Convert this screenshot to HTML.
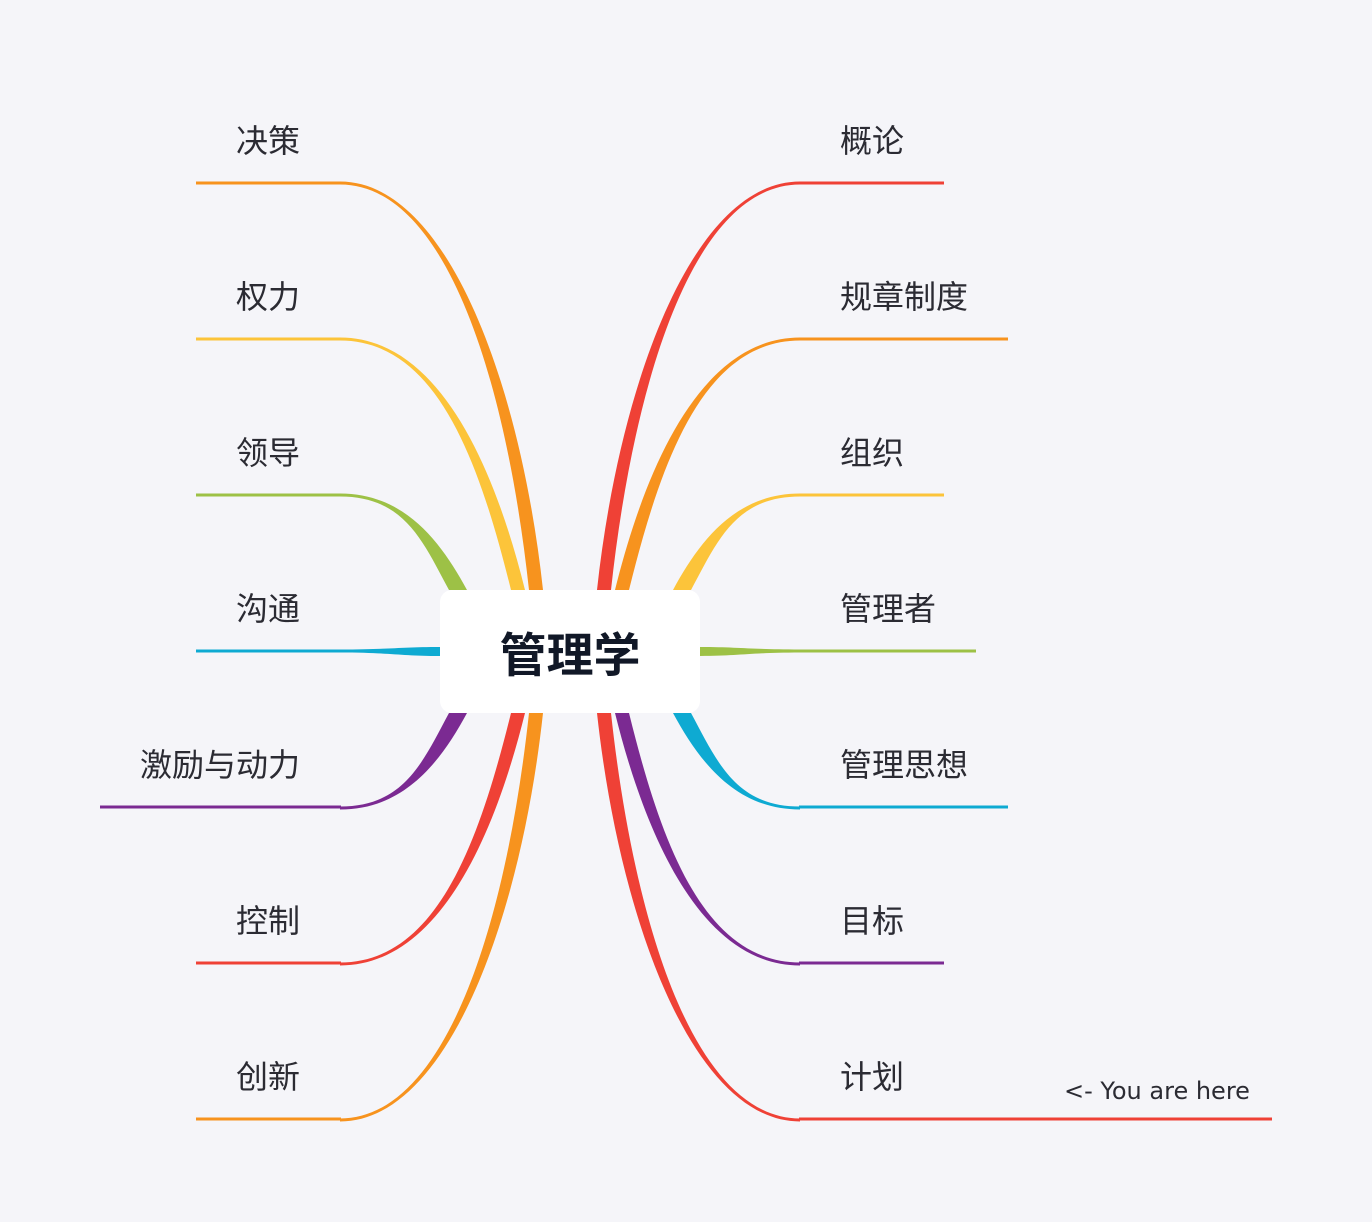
<!DOCTYPE html>
<html><head><meta charset="utf-8"><style>
html,body{margin:0;padding:0;background:#f5f5f9;}
body{width:1372px;height:1222px;position:relative;overflow:hidden;font-family:"Liberation Sans","Noto Sans CJK SC",sans-serif;}
.l{position:absolute;font-size:32px;color:#2b2b33;line-height:38px;white-space:nowrap;}
.lt{right:1072px;text-align:right;}
.rt{left:840px;}
.box{position:absolute;left:440px;top:590px;width:260px;height:123px;background:#fff;border-radius:12px;display:flex;align-items:center;justify-content:center;font-size:47px;font-weight:bold;color:#111827;}
.here{position:absolute;left:1064px;top:1077px;font-size:24px;color:#2b2b33;font-family:"DejaVu Sans",sans-serif;}
</style></head><body>
<svg width="1372" height="1222" style="position:absolute;left:0;top:0">
<!-- left upper -->
<g>
<path fill="#fcc43a" d="M340,337.5 C438,337.5 494,465 525,590 L511,590 C480,465 438,340.5 340,340.5Z"/>
<path fill="#f7931e" d="M340,181.5 C448,181.5 521,387 543,590 L529,590 C507,387 448,184.5 340,184.5Z"/>
<path fill="#9dc146" d="M340,493.5 C405,493.5 441,542 467,590 L449,590 C423,542 405,496.5 340,496.5Z"/>
<path fill="#0eaad2" d="M340,649.5 C390,649.5 400,647 440,647 L440,656 C400,656 390,652.5 340,652.5Z"/>
</g>
<!-- left lower -->
<g transform="matrix(1,0,0,-1,0,1303)">
<path fill="#ef4136" d="M340,337.5 C438,337.5 494,465 525,590 L511,590 C480,465 438,340.5 340,340.5Z"/>
<path fill="#f7931e" d="M340,181.5 C448,181.5 521,387 543,590 L529,590 C507,387 448,184.5 340,184.5Z"/>
<path fill="#7b2a92" d="M340,493.5 C405,493.5 441,542 467,590 L449,590 C423,542 405,496.5 340,496.5Z"/>
</g>
<!-- right upper -->
<g transform="matrix(-1,0,0,1,1140,0)">
<path fill="#f7931e" d="M340,337.5 C438,337.5 494,465 525,590 L511,590 C480,465 438,340.5 340,340.5Z"/>
<path fill="#ef4136" d="M340,181.5 C448,181.5 521,387 543,590 L529,590 C507,387 448,184.5 340,184.5Z"/>
<path fill="#fcc43a" d="M340,493.5 C405,493.5 441,542 467,590 L449,590 C423,542 405,496.5 340,496.5Z"/>
<path fill="#9dc146" d="M340,649.5 C390,649.5 400,647 440,647 L440,656 C400,656 390,652.5 340,652.5Z"/>
</g>
<!-- right lower -->
<g transform="matrix(-1,0,0,-1,1140,1303)">
<path fill="#7b2a92" d="M340,337.5 C438,337.5 494,465 525,590 L511,590 C480,465 438,340.5 340,340.5Z"/>
<path fill="#ef4136" d="M340,181.5 C448,181.5 521,387 543,590 L529,590 C507,387 448,184.5 340,184.5Z"/>
<path fill="#0eaad2" d="M340,493.5 C405,493.5 441,542 467,590 L449,590 C423,542 405,496.5 340,496.5Z"/>
</g>
<rect x="196" y="181.5" width="145" height="3" fill="#f7931e"/>
<rect x="196" y="337.5" width="145" height="3" fill="#fcc43a"/>
<rect x="196" y="493.5" width="145" height="3" fill="#9dc146"/>
<rect x="196" y="649.5" width="145" height="3" fill="#0eaad2"/>
<rect x="100" y="805.5" width="241" height="3" fill="#7b2a92"/>
<rect x="196" y="961.5" width="145" height="3" fill="#ef4136"/>
<rect x="196" y="1117.5" width="145" height="3" fill="#f7931e"/>
<rect x="799" y="181.5" width="145" height="3" fill="#ef4136"/>
<rect x="799" y="337.5" width="209" height="3" fill="#f7931e"/>
<rect x="799" y="493.5" width="145" height="3" fill="#fcc43a"/>
<rect x="799" y="649.5" width="177" height="3" fill="#9dc146"/>
<rect x="799" y="805.5" width="209" height="3" fill="#0eaad2"/>
<rect x="799" y="961.5" width="145" height="3" fill="#7b2a92"/>
<rect x="799" y="1117.5" width="473" height="3" fill="#ef4136"/>
</svg>
<div class="box">管理学</div>
<div class="l lt" style="top:122px">决策</div>
<div class="l lt" style="top:278px">权力</div>
<div class="l lt" style="top:434px">领导</div>
<div class="l lt" style="top:590px">沟通</div>
<div class="l lt" style="top:746px">激励与动力</div>
<div class="l lt" style="top:902px">控制</div>
<div class="l lt" style="top:1058px">创新</div>
<div class="l rt" style="top:122px">概论</div>
<div class="l rt" style="top:278px">规章制度</div>
<div class="l rt" style="top:434px">组织</div>
<div class="l rt" style="top:590px">管理者</div>
<div class="l rt" style="top:746px">管理思想</div>
<div class="l rt" style="top:902px">目标</div>
<div class="l rt" style="top:1058px">计划</div>
<div class="here">&lt;- You are here</div>
</body></html>
